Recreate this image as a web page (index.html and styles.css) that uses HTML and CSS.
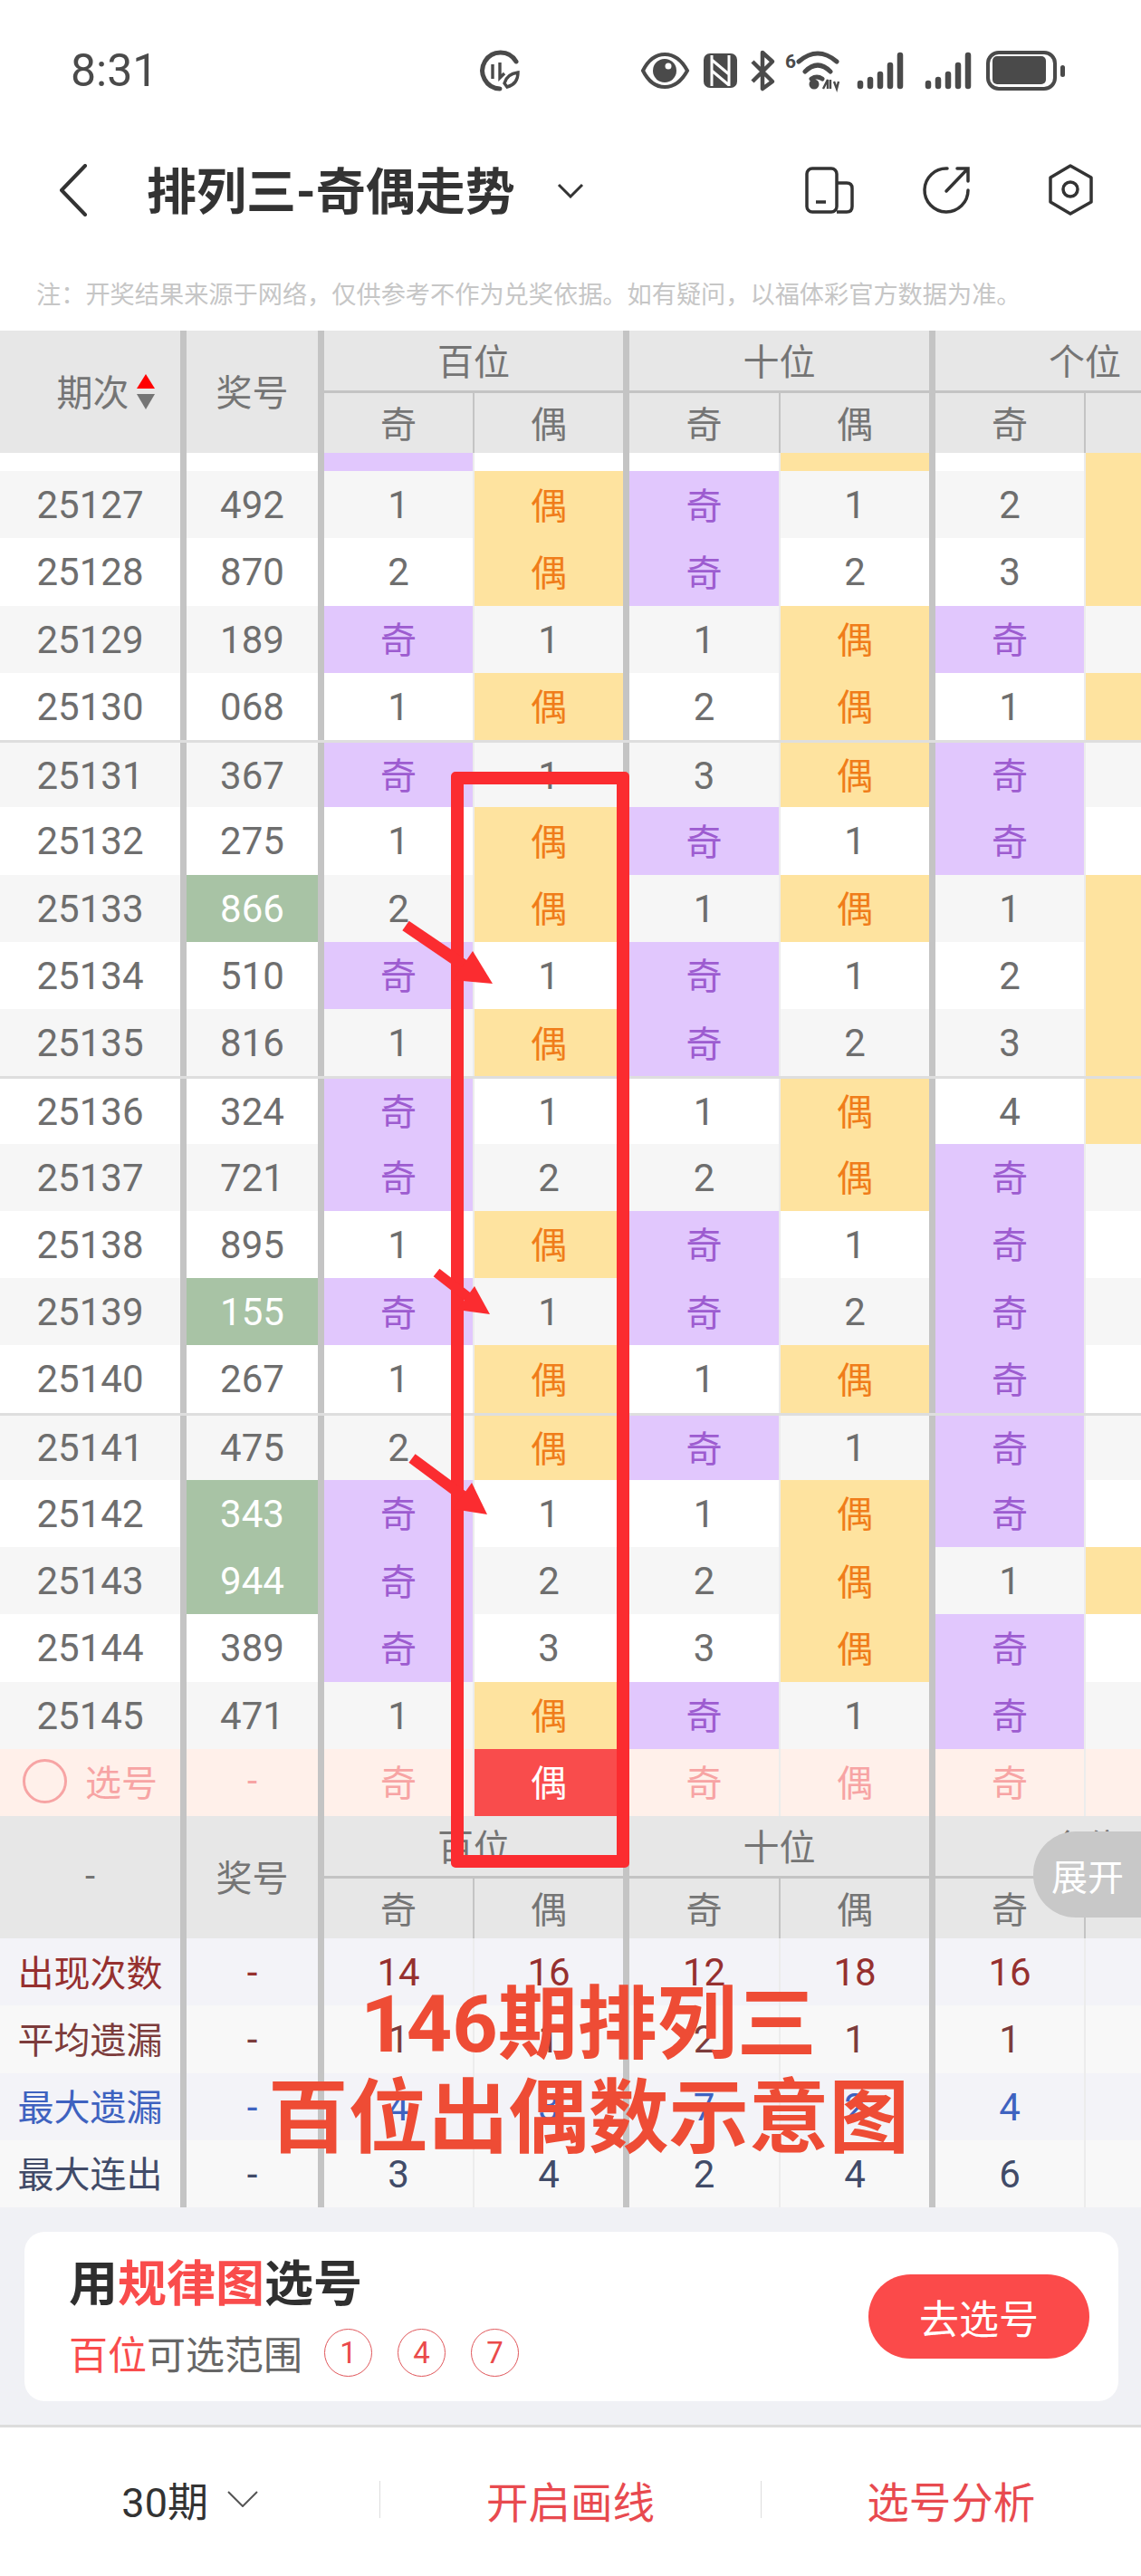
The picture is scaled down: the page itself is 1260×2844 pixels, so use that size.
FILE: index.html
```html
<!DOCTYPE html>
<html lang="zh-CN">

<head>
   <meta charset="UTF-8">
   <meta name="viewport" content="width=device-width, initial-scale=1.0">
   <title>排列三-奇偶走势</title>
   <link rel="stylesheet" href="styles.css">
</head>

<body>
   <div class="page">
      <div class="status">
         <span class="time">8:31</span>
         <svg class="speed" width="50" height="48" viewBox="528 54 50 48">
            <path d="M570 68A20 20 0 1 0 552 98" fill="none" stroke="#4a4a4a" stroke-width="5" stroke-linecap="round" />
            <path d="M544 71v16M552 69v17l5-5M557 92c2-8 7-11 15-12 0 8-4 14-12 16z" fill="none" stroke="#4a4a4a" stroke-width="3.4" />
         </svg>
         <svg class="status-icons" width="470" height="56" viewBox="707 50 470 56">
            <path d="M710 78C722 54 746 54 759 78 746 102 722 102 710 78Z" fill="none" stroke="#4a4a4a" stroke-width="4" />
            <circle cx="734" cy="78" r="13" fill="#4a4a4a" />
            <circle cx="738" cy="73" r="3.5" fill="#fff" />
            <rect x="777" y="59" width="37" height="38" rx="7" fill="#4a4a4a" />
            <path d="M786 61V95M805 61V95M786 66L805 82M786 78L805 94" fill="none" stroke="#fff" stroke-width="3" />
            <path d="M831 68L853 90 842 98V58L853 68 831 90" fill="none" stroke="#4a4a4a" stroke-width="4.5" stroke-linejoin="round" />
            <text class="wifi-six" x="867" y="75">6</text>
            <path d="M882 68Q903 50 924 68M889 79Q903 65 917 79M896 87Q902 83 908 87" fill="none" stroke="#4a4a4a" stroke-width="5" stroke-linecap="round" />
            <circle cx="899" cy="93" r="5.5" fill="#4a4a4a" />
            <path d="M909 98L914 88V98M917 88V98M921 90L924 98 926 90" fill="none" stroke="#4a4a4a" stroke-width="2.4" />
            <path d="M950 92v3M961 88v7M972 82v13M983 72v23M994 61v34" stroke="#4a4a4a" stroke-width="6.5" stroke-linecap="round" />
            <path d="M1025 92v3M1036 88v7M1047 82v13M1058 72v23M1069 61v34" stroke="#4a4a4a" stroke-width="6.5" stroke-linecap="round" />
            <rect x="1091" y="58" width="74" height="40" rx="12" fill="none" stroke="#4a4a4a" stroke-width="4" />
            <rect x="1096" y="62" width="59" height="31" rx="5" fill="#4a4a4a" />
            <rect x="1171" y="72" width="5" height="13" rx="2.5" fill="#4a4a4a" />
         </svg>
      </div>

      <div class="nav">
         <svg class="back" width="32" height="58" viewBox="0 0 32 58">
            <path d="M29 2L3 29 29 56" fill="none" stroke="#333" stroke-width="4" stroke-linecap="round" stroke-linejoin="round" />
         </svg>
         <h1>排列三-奇偶走势</h1>
         <svg class="caret" width="30" height="17" viewBox="0 0 30 17">
            <path d="M2 2L15 15 28 2" fill="none" stroke="#333" stroke-width="3" />
         </svg>
         <svg class="nav-icons" width="322" height="58" viewBox="888 184 322 58">
            <rect x="891" y="189" width="33" height="48" rx="6" fill="none" stroke="#333" stroke-width="3.5" />
            <path d="M924 205H935Q941 205 941 211V231Q941 237 935 237H924" fill="none" stroke="#333" stroke-width="3.5" />
            <path d="M901 226H912" stroke="#333" stroke-width="3.5" />
            <path d="M1046 189A24 24 0 1 0 1069 213" fill="none" stroke="#333" stroke-width="3.5" stroke-linecap="round" />
            <path d="M1045 214L1068 190M1057 189H1069V203" fill="none" stroke="#333" stroke-width="3.5" stroke-linecap="round" />
            <path d="M1182 186L1205 199V226L1182 239 1160 226V199Z" fill="none" stroke="#333" stroke-width="3.5" stroke-linejoin="round" />
            <circle cx="1182" cy="212" r="8" fill="none" stroke="#333" stroke-width="3.5" />
         </svg>
      </div>

      <p class="note">注：开奖结果来源于网络，仅供参考不作为兑奖依据。如有疑问，以福体彩官方数据为准。</p>

      <div class="thead">
         <div class="th tall major sortable">期次<span class="sort"><i class="up"></i><i class="down"></i></span></div>
         <div class="th tall major">奖号</div>
         <div class="th group">百位</div>
         <div class="th group">十位</div>
         <div class="th group last">个位</div>
         <div class="th minor">奇</div>
         <div class="th major">偶</div>
         <div class="th minor">奇</div>
         <div class="th major">偶</div>
         <div class="th minor">奇</div>
         <div class="th"></div>
      </div>

      <div class="rows">
         <div class="row partial"><div></div><div></div><div class="odd"></div><div></div><div></div><div class="even">偶</div><div></div><div class="even"></div></div>
         <div class="row"><div>25127</div><div>492</div><div>1</div><div class="even">偶</div><div class="odd">奇</div><div>1</div><div>2</div><div class="even"></div></div>
         <div class="row"><div>25128</div><div>870</div><div>2</div><div class="even">偶</div><div class="odd">奇</div><div>2</div><div>3</div><div class="even"></div></div>
         <div class="row"><div>25129</div><div>189</div><div class="odd">奇</div><div>1</div><div>1</div><div class="even">偶</div><div class="odd">奇</div><div></div></div>
         <div class="row"><div>25130</div><div>068</div><div>1</div><div class="even">偶</div><div>2</div><div class="even">偶</div><div>1</div><div class="even"></div></div>
         <div class="row split"><div>25131</div><div>367</div><div class="odd">奇</div><div>1</div><div>3</div><div class="even">偶</div><div class="odd">奇</div><div></div></div>
         <div class="row"><div>25132</div><div>275</div><div>1</div><div class="even">偶</div><div class="odd">奇</div><div>1</div><div class="odd">奇</div><div></div></div>
         <div class="row"><div>25133</div><div class="hit">866</div><div>2</div><div class="even">偶</div><div>1</div><div class="even">偶</div><div>1</div><div class="even"></div></div>
         <div class="row"><div>25134</div><div>510</div><div class="odd">奇</div><div>1</div><div class="odd">奇</div><div>1</div><div>2</div><div class="even"></div></div>
         <div class="row"><div>25135</div><div>816</div><div>1</div><div class="even">偶</div><div class="odd">奇</div><div>2</div><div>3</div><div class="even"></div></div>
         <div class="row split"><div>25136</div><div>324</div><div class="odd">奇</div><div>1</div><div>1</div><div class="even">偶</div><div>4</div><div class="even"></div></div>
         <div class="row"><div>25137</div><div>721</div><div class="odd">奇</div><div>2</div><div>2</div><div class="even">偶</div><div class="odd">奇</div><div></div></div>
         <div class="row"><div>25138</div><div>895</div><div>1</div><div class="even">偶</div><div class="odd">奇</div><div>1</div><div class="odd">奇</div><div></div></div>
         <div class="row"><div>25139</div><div class="hit">155</div><div class="odd">奇</div><div>1</div><div class="odd">奇</div><div>2</div><div class="odd">奇</div><div></div></div>
         <div class="row"><div>25140</div><div>267</div><div>1</div><div class="even">偶</div><div>1</div><div class="even">偶</div><div class="odd">奇</div><div></div></div>
         <div class="row split"><div>25141</div><div>475</div><div>2</div><div class="even">偶</div><div class="odd">奇</div><div>1</div><div class="odd">奇</div><div></div></div>
         <div class="row"><div>25142</div><div class="hit">343</div><div class="odd">奇</div><div>1</div><div>1</div><div class="even">偶</div><div class="odd">奇</div><div></div></div>
         <div class="row"><div>25143</div><div class="hit">944</div><div class="odd">奇</div><div>2</div><div>2</div><div class="even">偶</div><div>1</div><div class="even"></div></div>
         <div class="row"><div>25144</div><div>389</div><div class="odd">奇</div><div>3</div><div>3</div><div class="even">偶</div><div class="odd">奇</div><div></div></div>
         <div class="row"><div>25145</div><div>471</div><div>1</div><div class="even">偶</div><div class="odd">奇</div><div>1</div><div class="odd">奇</div><div></div></div>
      </div>

      <div class="row pick">
         <div><span class="ring"></span>选号</div><div>-</div><div>奇</div><div class="chosen">偶</div><div>奇</div><div>偶</div><div>奇</div><div></div>
      </div>

      <div class="thead">
         <div class="th tall major">-</div>
         <div class="th tall major">奖号</div>
         <div class="th group">百位</div>
         <div class="th group">十位</div>
         <div class="th group last">个位</div>
         <div class="th minor">奇</div>
         <div class="th major">偶</div>
         <div class="th minor">奇</div>
         <div class="th major">偶</div>
         <div class="th minor">奇</div>
         <div class="th"></div>
      </div>

      <div class="row stat count"><div>出现次数</div><div>-</div><div>14</div><div>16</div><div>12</div><div>18</div><div>16</div><div></div></div>
      <div class="row stat avg"><div>平均遗漏</div><div>-</div><div>1</div><div>1</div><div>2</div><div>1</div><div>1</div><div></div></div>
      <div class="row stat miss"><div>最大遗漏</div><div>-</div><div>4</div><div>3</div><div>7</div><div>2</div><div>4</div><div></div></div>
      <div class="row stat run"><div>最大连出</div><div>-</div><div>3</div><div>4</div><div>2</div><div>4</div><div>6</div><div></div></div>

      <div class="picker">
         <div class="card">
            <div class="card-text">
               <p class="card-title">用<em>规律图</em>选号</p>
               <p class="card-sub"><em>百位</em>可选范围<span class="ball">1</span><span class="ball">4</span><span class="ball">7</span></p>
            </div>
            <a class="go">去选号</a>
         </div>
      </div>

      <div class="footer">
         <div class="tab period">30期
            <svg width="34" height="18" viewBox="0 0 34 18">
               <path d="M1 1L17 17 33 1" fill="none" stroke="#555" stroke-width="2" />
            </svg>
         </div>
         <i class="sep"></i>
         <div class="tab">开启画线</div>
         <i class="sep"></i>
         <div class="tab">选号分析</div>
      </div>

      <!-- annotations drawn over the screenshot -->
      <div class="box"></div>
      <svg class="arrows" width="1260" height="2844" viewBox="0 0 1260 2844">
         <path d="M448 1022L520 1071" stroke="#fb2c30" stroke-width="13" />
         <path d="M544 1086L500 1082 522 1050Z" fill="#fb2c30" />
         <path d="M482 1405L522 1436" stroke="#fb2c30" stroke-width="11" />
         <path d="M541 1451L505 1446 524 1420Z" fill="#fb2c30" />
         <path d="M455 1610L517 1656" stroke="#fb2c30" stroke-width="12" />
         <path d="M538 1672L500 1666 521 1637Z" fill="#fb2c30" />
      </svg>
      <div class="caption">
         <p>146期排列三</p>
         <p class="caption-wide">百位出偶数示意图</p>
      </div>
      <div class="expand">展开</div>
   </div>
</body>

</html>
```

FILE: styles.css
```css
* {
   margin: 0;
   padding: 0;
   box-sizing: border-box;
   font-family: Roboto, 'Noto Sans CJK SC', sans-serif;
}

body {
   background-color: #fff;
}

.page {
   position: relative;
   width: 1260px;
   height: 2844px;
   overflow: hidden;
}

/* status bar */
.status {
   height: 156px;
   padding-left: 78px;
   display: flex;
   align-items: center;
}

.time {
   width: 450px;
   font-size: 50px;
   color: #4a4a4a;
}

.status-icons {
   margin-left: 129px;
}

.wifi-six {
   font-size: 21px;
   font-weight: 700;
   fill: #4a4a4a;
}

/* title bar */
.nav {
   height: 108px;
   padding-left: 65px;
   display: flex;
   align-items: center;
}

.nav h1 {
   margin-left: 65px;
   padding-bottom: 6px;
   font-size: 55px;
   font-weight: 700;
   color: #333;
   white-space: nowrap;
}

.caret {
   margin-left: 46px;
}

.nav-icons {
   margin-left: auto;
   margin-right: 50px;
}

.note {
   height: 101px;
   padding: 44px 0 0 40px;
   font-size: 27.2px;
   line-height: 36px;
   color: #c6c6c6;
   white-space: nowrap;
}

/* table */
.thead {
   display: grid;
   grid-template-columns: 206px 152px 166px 171px 167px 171px 166px 164px;
   grid-template-rows: 69px 66px;
   width: 1363px;
   background-color: #e7e7e7;
}

.th {
   display: flex;
   align-items: center;
   justify-content: center;
   padding-bottom: 3px;
   font-size: 40px;
   color: #757575;
}

.th.tall {
   grid-row: 1 / 3;
}

.th.major {
   border-right: 7px solid #c4c4c4;
}

.th.minor {
   border-right: 2px solid #c4c4c4;
}

.th.group {
   grid-column: span 2;
   border-right: 7px solid #c4c4c4;
   border-bottom: 3px solid #c4c4c4;
}

.th.group.last {
   border-right: none;
}

.th.sortable {
   padding-left: 34px;
}

.sort {
   display: inline-flex;
   flex-direction: column;
   gap: 6px;
   margin-left: 8px;
   margin-top: 3px;
}

.sort i {
   display: block;
   width: 0;
   height: 0;
   border-left: 10px solid transparent;
   border-right: 10px solid transparent;
}

.sort .up {
   border-bottom: 16px solid #f00;
}

.sort .down {
   border-top: 17px solid #757575;
}

.row {
   display: grid;
   grid-template-columns: 206px 152px 166px 171px 167px 171px 166px 164px;
   width: 1363px;
   height: 74.26px;
   font-size: 42px;
   color: #6e6e6e;
   background-color: #fff;
}

.row > div {
   display: flex;
   align-items: center;
   justify-content: center;
   padding-top: 1px;
}

.row > div:nth-child(1),
.row > div:nth-child(2),
.row > div:nth-child(4),
.row > div:nth-child(6) {
   border-right: 7px solid #c4c4c4;
}

.row > div:nth-child(3),
.row > div:nth-child(5),
.row > div:nth-child(7) {
   border-right: 2px solid #ececec;
}

.rows .row:nth-child(even) {
   background-color: #f6f6f6;
}

.row .odd {
   padding: 0 0 3px;
   background-color: #e1c7fd;
   color: #9d5cd0;
   font-size: 40px;
}

.row .even {
   padding: 0 0 3px;
   background-color: #fee39f;
   color: #f07d1a;
   font-size: 40px;
}

.row.partial {
   height: 20px;
   grid-template-rows: 20px;
   align-items: end;
   overflow: hidden;
}

.row.partial > div {
   height: 74px;
}

.row.partial .even {
   padding-bottom: 17px;
}

.row.split {
   border-top: 3px solid #dedede;
}

.row .hit {
   background-color: #a8c3a5;
   color: #fff;
}

.row.pick {
   background-color: #fff0ea;
   color: #f7a4a4;
   font-size: 40px;
}

.row.pick > div {
   padding: 0 0 3px;
}

.ring {
   width: 49px;
   height: 49px;
   margin-right: 20px;
   border: 3px solid #f7a4a4;
   border-radius: 50%;
}

.row.pick .chosen {
   background-color: #f94c4c;
   color: #fff;
}

.row.stat {
   background-color: #f8f8f8;
}

.row.count,
.row.miss {
   background-color: #f3f3f8;
}

.row.stat > div:first-child {
   padding: 0 0 3px;
   font-size: 40px;
   white-space: nowrap;
}

.row.count {
   color: #96302f;
}

.row.avg {
   color: #7c3c3c;
}

.row.miss {
   color: #3e62c0;
}

.row.run {
   color: #414b68;
}

/* picker card */
.picker {
   height: 240px;
   padding: 27px 25px 26px 27px;
   background-color: #f0f1f5;
}

.card {
   height: 187px;
   padding: 0 32px 0 49px;
   display: flex;
   align-items: center;
   justify-content: space-between;
   background-color: #fff;
   border-radius: 22px;
}

.card em {
   font-style: normal;
   color: #f94c4c;
}

.card-text {
   align-self: flex-start;
   padding-top: 29px;
}

.card-title {
   height: 60px;
   font-size: 54px;
   line-height: 60px;
   font-weight: 700;
   color: #2f2f2f;
}

.card-sub {
   margin-top: 13px;
   display: flex;
   align-items: center;
   font-size: 43px;
   color: #666;
}

.ball {
   width: 53px;
   height: 53px;
   margin-left: 28px;
   display: flex;
   align-items: center;
   justify-content: center;
   font-size: 33px;
   color: #ea4a4a;
   border: 1.5px solid #e0565a;
   border-radius: 50%;
}

.ball:first-of-type {
   margin-left: 24px;
}

.go {
   width: 244px;
   height: 93px;
   display: flex;
   align-items: center;
   justify-content: center;
   font-size: 44px;
   color: #fff;
   background-color: #fb4a4a;
   border-radius: 47px;
}

/* bottom bar */
.footer {
   height: 167px;
   padding-bottom: 6px;
   display: flex;
   align-items: center;
   background-color: #fff;
   border-top: 3px solid #dcdcdc;
}

.tab {
   flex: 1;
   display: flex;
   align-items: center;
   justify-content: center;
   font-size: 46.5px;
   color: #e84a4f;
}

.tab.period {
   gap: 21px;
   font-size: 45px;
   color: #333;
}

.sep {
   width: 1px;
   height: 41px;
   background-color: #ddd;
}

/* annotations */
.box {
   position: absolute;
   left: 498px;
   top: 852px;
   width: 197px;
   height: 1210px;
   border: 14px solid #fb2c30;
   border-radius: 5px;
}

.arrows {
   position: absolute;
   left: 0;
   top: 0;
}

.caption {
   position: absolute;
   left: 200px;
   top: 2183px;
   width: 900px;
   text-align: center;
   font-size: 88px;
   font-weight: 700;
   line-height: 104px;
   color: #ee4c35;
}

.caption-wide {
   font-size: 88.5px;
}

.expand {
   position: absolute;
   left: 1141px;
   top: 2022px;
   width: 119px;
   height: 95px;
   padding-left: 20px;
   display: flex;
   align-items: center;
   font-size: 40px;
   color: #fff;
   background-color: #c8c8c8;
   border-radius: 47px 0 0 47px;
}
```
